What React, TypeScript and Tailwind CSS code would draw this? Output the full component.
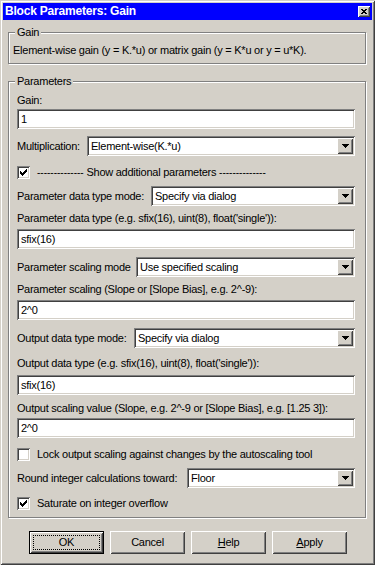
import React from 'react';

// classic win2k bevels
const sunken =
    'shadow-[inset_1px_1px_0_#808080,inset_-1px_-1px_0_#ffffff,inset_2px_2px_0_#404040,inset_-2px_-2px_0_#d4d0c8]';
const raised =
    'shadow-[inset_1px_1px_0_#ffffff,inset_-1px_-1px_0_#404040,inset_2px_2px_0_#d4d0c8,inset_-2px_-2px_0_#808080]';

const Label: React.FC<{ children: React.ReactNode; className?: string }> = ({ children, className = '' }) => (
    <div className={`h-[14px] leading-[14px] whitespace-nowrap ${className}`}>{children}</div>
);

const TextField: React.FC<{ value: string; className?: string }> = ({ value, className = '' }) => (
    <div className={`h-[20px] w-full bg-white ${sunken} pl-[4px] flex items-center whitespace-nowrap ${className}`}>
        {value}
    </div>
);

const Select: React.FC<{ value: string; width: string }> = ({ value, width }) => (
    <div className={`${width} h-[20px] bg-white ${sunken} p-[2px] flex`}>
        <div className="flex-1 pl-[2px] flex items-center whitespace-nowrap">{value}</div>
        <div className={`w-[16px] bg-[#d4d0c8] ${raised} flex items-center justify-center`}>
            <svg width="7" height="4" viewBox="0 0 7 4" shapeRendering="crispEdges">
                <path d="M0 0h7v1h-1v1h-1v1h-1v1h-1v-1h-1v-1h-1v-1h-1z" fill="#000" />
            </svg>
        </div>
    </div>
);

const Checkbox: React.FC<{ checked: boolean }> = ({ checked }) => (
    <div className={`w-[13px] h-[13px] shrink-0 bg-white ${sunken} flex items-center justify-center`}>
        {checked && (
            <svg width="7" height="7" viewBox="0 0 7 7" shapeRendering="crispEdges">
                <path
                    d="M6 0h1v3h-1v1h-1v1h-1v1h-1v1h-1v-1h-1v-1h-1v-3h1v1h1v1h1v-1h1v-1h1z"
                    fill="#000"
                />
            </svg>
        )}
    </div>
);

const CheckRow: React.FC<{ checked: boolean; children: React.ReactNode; className?: string }> = ({
    checked,
    children,
    className = '',
}) => (
    <div className={`h-[14px] flex items-center gap-[7px] whitespace-nowrap ${className}`}>
        <Checkbox checked={checked} />
        <span className="leading-[14px]">{children}</span>
    </div>
);

const Row: React.FC<{ label: string; value: string; width: string; className?: string }> = ({
    label,
    value,
    width,
    className = '',
}) => (
    <div className={`flex items-center justify-between ${className}`}>
        <span className="whitespace-nowrap leading-[14px]">{label}</span>
        <Select value={value} width={width} />
    </div>
);

const PushButton: React.FC<{ children: React.ReactNode; isDefault?: boolean }> = ({ children, isDefault }) =>
    isDefault ? (
        <div className="w-[75px] h-[23px] border border-black">
            <div className={`h-full bg-[#d4d0c8] ${raised} p-[3px] flex`}>
                <div className="flex-1 border border-dotted border-black flex items-center justify-center">
                    {children}
                </div>
            </div>
        </div>
    ) : (
        <div className={`w-[75px] h-[23px] bg-[#d4d0c8] ${raised} flex items-center justify-center`}>{children}</div>
    );

export default function App() {
    return (
        <div className="w-[375px] h-[565px] bg-[#d4d0c8] text-black text-[11px] tracking-[-0.25px] font-['Liberation_Sans',Arial,sans-serif] p-[3px] shadow-[inset_1px_1px_0_#d4d0c8,inset_-1px_-1px_0_#404040,inset_2px_2px_0_#ffffff,inset_-2px_-2px_0_#808080] flex flex-col">
            {/* Title bar */}
            <div className="h-[17px] bg-[#0000ff] flex items-center justify-between pl-[2px] pr-[2px]">
                <span className="text-white font-bold text-[12px] tracking-[-0.2px] leading-[17px]">
                    Block Parameters: Gain
                </span>
                <div className={`w-[12px] h-[11px] bg-[#d4d0c8] ${raised} flex items-center justify-center`}>
                    <svg width="6" height="5" viewBox="0 0 6 5" shapeRendering="crispEdges">
                        <path
                            d="M0 0h2v1h2v-1h2v1h-1v1h-1v1h1v1h1v1h-2v-1h-2v1h-2v-1h1v-1h1v-1h-1v-1h-1z"
                            fill="#000"
                        />
                    </svg>
                </div>
            </div>

            <div className="flex-1 px-[5px]">
                {/* Gain group */}
                <div className="relative mt-[12px] w-[358px] border border-[#808080] shadow-[inset_1px_1px_0_#ffffff,1px_1px_0_#ffffff] pt-[10px] pb-[6px] pl-[4px]">
                    <span className="absolute left-[6px] top-[-8px] px-[2px] bg-[#d4d0c8] leading-[14px]">Gain</span>
                    <Label>Element-wise gain (y = K.*u) or matrix gain (y = K*u or y = u*K).</Label>
                </div>

                {/* Parameters group */}
                <div className="relative mt-[17px] w-[358px] border border-[#808080] shadow-[inset_1px_1px_0_#ffffff,1px_1px_0_#ffffff] pt-[11px] pb-[7px] pl-[8px] pr-[10px]">
                    <span className="absolute left-[6px] top-[-8px] px-[2px] bg-[#d4d0c8] leading-[14px]">Parameters</span>

                    <Label>Gain:</Label>
                    <TextField value="1" className="mt-[2px]" />
                    <Row label="Multiplication:" value="Element-wise(K.*u)" width="w-[268px]" className="mt-[7px]" />
                    <CheckRow checked className="mt-[9px]">
                        <span className="text-[10px] tracking-normal">--------------</span> Show additional parameters{' '}
                        <span className="text-[10px] tracking-normal">--------------</span>
                    </CheckRow>
                    <Row label="Parameter data type mode:" value="Specify via dialog" width="w-[204px]" className="mt-[7px]" />
                    <Label className="mt-[5px]">Parameter data type (e.g. sfix(16), uint(8), float('single')):</Label>
                    <TextField value="sfix(16)" className="mt-[4px]" />
                    <Row label="Parameter scaling mode" value="Use specified scaling" width="w-[219px]" className="mt-[8px]" />
                    <Label className="mt-[5px]">Parameter scaling (Slope or [Slope Bias], e.g. 2^-9):</Label>
                    <TextField value="2^0" className="mt-[4px]" />
                    <Row label="Output data type mode:" value="Specify via dialog" width="w-[221px]" className="mt-[8px]" />
                    <Label className="mt-[8px]">Output data type (e.g. sfix(16), uint(8), float('single')):</Label>
                    <TextField value="sfix(16)" className="mt-[5px]" />
                    <Label className="mt-[6px]">
                        Output scaling value (Slope, e.g. 2^-9 or [Slope Bias], e.g. [1.25 3]):
                    </Label>
                    <TextField value="2^0" className="mt-[3px]" />
                    <CheckRow checked={false} className="mt-[9px]">
                        Lock output scaling against changes by the autoscaling tool
                    </CheckRow>
                    <Row label="Round integer calculations toward:" value="Floor" width="w-[168px]" className="mt-[7px]" />
                    <CheckRow checked className="mt-[8px]">
                        Saturate on integer overflow
                    </CheckRow>
                </div>

                {/* Buttons */}
                <div className="mt-[13px] ml-[21px] flex gap-[6px]">
                    <PushButton isDefault>OK</PushButton>
                    <PushButton>Cancel</PushButton>
                    <PushButton>
                        <span>
                            <span className="underline">H</span>elp
                        </span>
                    </PushButton>
                    <PushButton>
                        <span>
                            <span className="underline">A</span>pply
                        </span>
                    </PushButton>
                </div>
            </div>
        </div>
    );
}
